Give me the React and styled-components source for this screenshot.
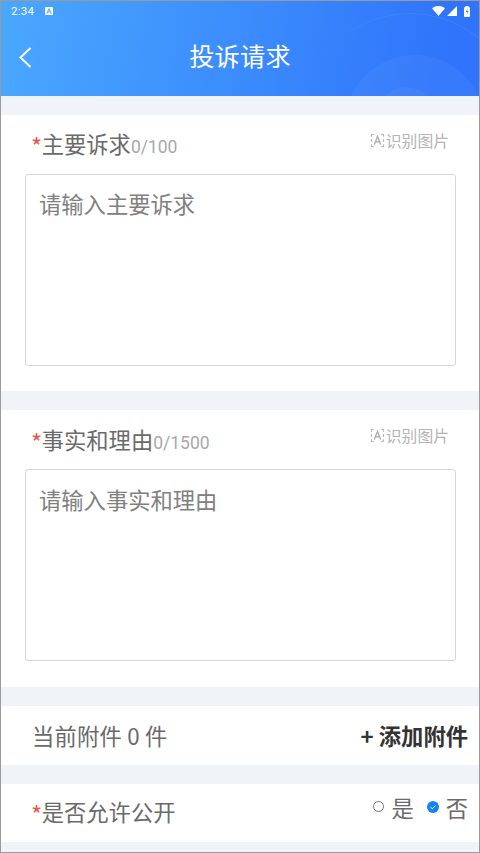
import React from 'react';
import styled, { createGlobalStyle } from 'styled-components';

const GlobalStyle = createGlobalStyle`
  html, body {
    margin: 0;
    padding: 0;
    background: #f0f3f8;
  }
  * {
    box-sizing: border-box;
  }
`;

const Page = styled.div`
  width: 480px;
  height: 853px;
  display: flex;
  flex-direction: column;
  overflow: hidden;
  border: 1px solid #9a9a9a;
  background: #f0f3f8;
  font-family: "Noto Sans CJK SC", "Roboto", sans-serif;
`;

const Header = styled.header`
  position: relative;
  flex: none;
  height: 95px;
  overflow: hidden;
  color: #fff;
  background: linear-gradient(100deg, #4aa8fe 0%, #2f74fb 92%);
`;

const Ring = styled.div`
  position: absolute;
  left: ${p => p.$left}px;
  top: ${p => p.$top}px;
  width: ${p => p.$size}px;
  height: ${p => p.$size}px;
  border-radius: 50%;
  background: ${p => p.$fill || 'transparent'};
  border: ${p => (p.$line ? '1px solid rgba(255,255,255,0.09)' : 'none')};
  mask-image: ${p => (p.$line ? 'linear-gradient(to right, transparent 12%, #000 45%)' : 'none')};
`;

const StatusBar = styled.div`
  position: relative;
  height: 19px;
  padding: 1px 7px 0 10px;
  display: flex;
  align-items: center;
  justify-content: space-between;
`;

const StatusLeft = styled.div`
  display: flex;
  align-items: center;
  gap: 11px;
`;

const Time = styled.span`
  font-family: "Roboto", sans-serif;
  font-size: 11.5px;
  letter-spacing: 0.3px;
`;

const StatusRight = styled.div`
  display: flex;
  align-items: center;
  gap: 2px;
`;

const NavBar = styled.div`
  position: relative;
  height: 76px;
  padding-bottom: 1px;
  display: flex;
  align-items: center;
  justify-content: center;
`;

const BackButton = styled.div`
  position: absolute;
  left: 16px;
  top: 25px;
  width: 16px;
  height: 24px;
`;

const Title = styled.h1`
  margin: 0 0 5px;
  font-size: 25.2px;
  font-weight: 400;
  line-height: 34px;
  letter-spacing: 0.2px;
`;

const Content = styled.main`
  flex: 1;
  padding-top: 19px;
  display: flex;
  flex-direction: column;
  gap: 19px;
`;

const Card = styled.section`
  background: #fff;
  height: ${p => p.$height}px;
  padding: 0 23px 0 24px;
`;

const CardHead = styled.div`
  height: 59px;
  padding: ${p => 8 + p.$nudge}px 7px 0 6px;
  display: flex;
  justify-content: space-between;
`;

const Label = styled.div`
  display: flex;
  align-items: baseline;
  height: 40px;
  color: #6a6a6a;
  font-size: 22.3px;
  line-height: 40px;
`;

const Star = styled.span`
  display: inline-block;
  width: 10.7px;
  color: #f0524d;
  font-size: 24px;
  transform: translateY(3px);
`;

const Counter = styled.span`
  font-family: "Roboto", sans-serif;
  color: #a8a8a8;
  font-size: 17.5px;
`;

const Recognize = styled.div`
  display: flex;
  align-items: center;
  height: ${p => 34 - 2 * p.$nudge}px;
  gap: 1px;
  color: #b4b4b4;
  font-size: 15.8px;
`;

const TextBox = styled.div`
  height: 192px;
  border: 1px solid #d6d6d6;
  border-radius: 3px;
  padding: ${p => 11 + p.$nudge}px 14px 0 13px;
  color: #808080;
  font-size: 22.3px;
  line-height: 34px;
`;

const Row = styled.section`
  height: ${p => p.$height}px;
  background: #fff;
  padding: 0 11px 0 ${p => p.$left}px;
  display: flex;
  align-items: center;
  justify-content: space-between;
`;

const RowText = styled.span`
  position: relative;
  top: -1px;
  color: #6a6a6a;
  font-size: 22.3px;
  letter-spacing: 0.2px;
`;

const AddButton = styled.span`
  position: relative;
  top: -1px;
  color: #333;
  font-size: 22.3px;
  font-weight: 700;
`;

const PublicLabel = styled.div`
  display: flex;
  align-items: baseline;
  margin-top: -5px;
  color: #6a6a6a;
  font-size: 22.3px;
`;

const Options = styled.div`
  display: flex;
  align-items: center;
  gap: 13px;
  margin-top: -13px;
`;

const Option = styled.div`
  display: flex;
  align-items: center;
  gap: 7px;
  color: #6a6a6a;
  font-size: 22.3px;
`;

const RadioOff = styled.span`
  width: 11px;
  height: 11px;
  border: 1px solid #777;
  border-radius: 50%;
`;

const ScanIcon = () => (
  <svg width="15" height="15" viewBox="0 0 16 16" fill="none" stroke="#aaa" strokeWidth="1">
    <path d="M4 1.5H1.5V4M1.5 6.5v3M12 1.5h2.5V4M14.5 6.5v3M4 14.5H1.5V12M12 14.5h2.5V12" />
    <path d="M4.6 12.4 8 3.6l3.4 8.8M5.8 9.4h4.4" strokeWidth="1.4" />
  </svg>
);

const RadioOn = () => (
  <svg width="12" height="12" viewBox="0 0 12 12">
    <circle cx="6" cy="6" r="6" fill="#1282f5" />
    <path d="M3.6 6.2 5.3 7.8 8.5 4.6" fill="none" stroke="#fff" strokeWidth="1" />
  </svg>
);

function Field({ label, max, placeholder, height, nudge = 0 }) {
  return (
    <Card $height={height}>
      <CardHead $nudge={nudge}>
        <Label>
          <Star>*</Star>
          {label}
          <Counter>0/{max}</Counter>
        </Label>
        <Recognize $nudge={nudge}>
          <ScanIcon />
          识别图片
        </Recognize>
      </CardHead>
      <TextBox $nudge={nudge}>{placeholder}</TextBox>
    </Card>
  );
}

export default function App() {
  return (
    <Page>
      <GlobalStyle />
      <Header>
        <Ring $left={299} $top={12} $size={220} $line />
        <Ring $left={344} $top={54} $size={140} $fill="rgba(255,255,255,0.045)" />
        <Ring $left={377} $top={86} $size={56} $fill="rgba(255,255,255,0.04)" />
        <StatusBar>
          <StatusLeft>
            <Time>2:34</Time>
            <svg width="8" height="8" viewBox="0 0 8 8">
              <rect width="8" height="8" rx="1" fill="#fff" />
              <path d="M1.8 6.6 4 1.6l2.2 5M2.8 5h2.4" fill="none" stroke="#4aa8fe" strokeWidth="1" />
            </svg>
          </StatusLeft>
          <StatusRight>
            <svg width="13" height="10" viewBox="0 0 13 10">
              <path d="M0 2.2C3.6-.7 9.4-.7 13 2.2L6.5 10Z" fill="#fff" />
            </svg>
            <svg width="11" height="10" viewBox="0 0 11 10">
              <path d="M0 10 10 0v10Z" fill="#fff" />
            </svg>
            <svg width="9" height="11" viewBox="0 0 9 11" style={{ marginLeft: 3 }}>
              <rect x="1" y="1" width="6" height="10" rx="1" fill="#fff" />
              <rect x="2.5" y="0" width="3" height="1" fill="#fff" />
              <path d="M4.4 2.6 3 6h1.2l-.4 2.6L5.4 5H4.2Z" fill="#2f74fb" />
            </svg>
          </StatusRight>
        </StatusBar>
        <NavBar>
          <BackButton>
            <svg width="16" height="24" viewBox="0 0 16 24" fill="none" stroke="#fff" strokeWidth="2">
              <path d="M13.5 3 3.5 12.5 13.5 22" />
            </svg>
          </BackButton>
          <Title>投诉请求</Title>
        </NavBar>
      </Header>
      <Content>
        <Field label="主要诉求" max={100} placeholder="请输入主要诉求" height={276} />
        <Field label="事实和理由" max={1500} placeholder="请输入事实和理由" height={277} nudge={1} />
        <Row $height={59} $left={31}>
          <RowText>当前附件 0 件</RowText>
          <AddButton>+ 添加附件</AddButton>
        </Row>
        <Row $height={58} $left={30}>
          <PublicLabel>
            <Star>*</Star>
            是否允许公开
          </PublicLabel>
          <Options>
            <Option>
              <RadioOff />是
            </Option>
            <Option>
              <RadioOn />否
            </Option>
          </Options>
        </Row>
      </Content>
    </Page>
  );
}
